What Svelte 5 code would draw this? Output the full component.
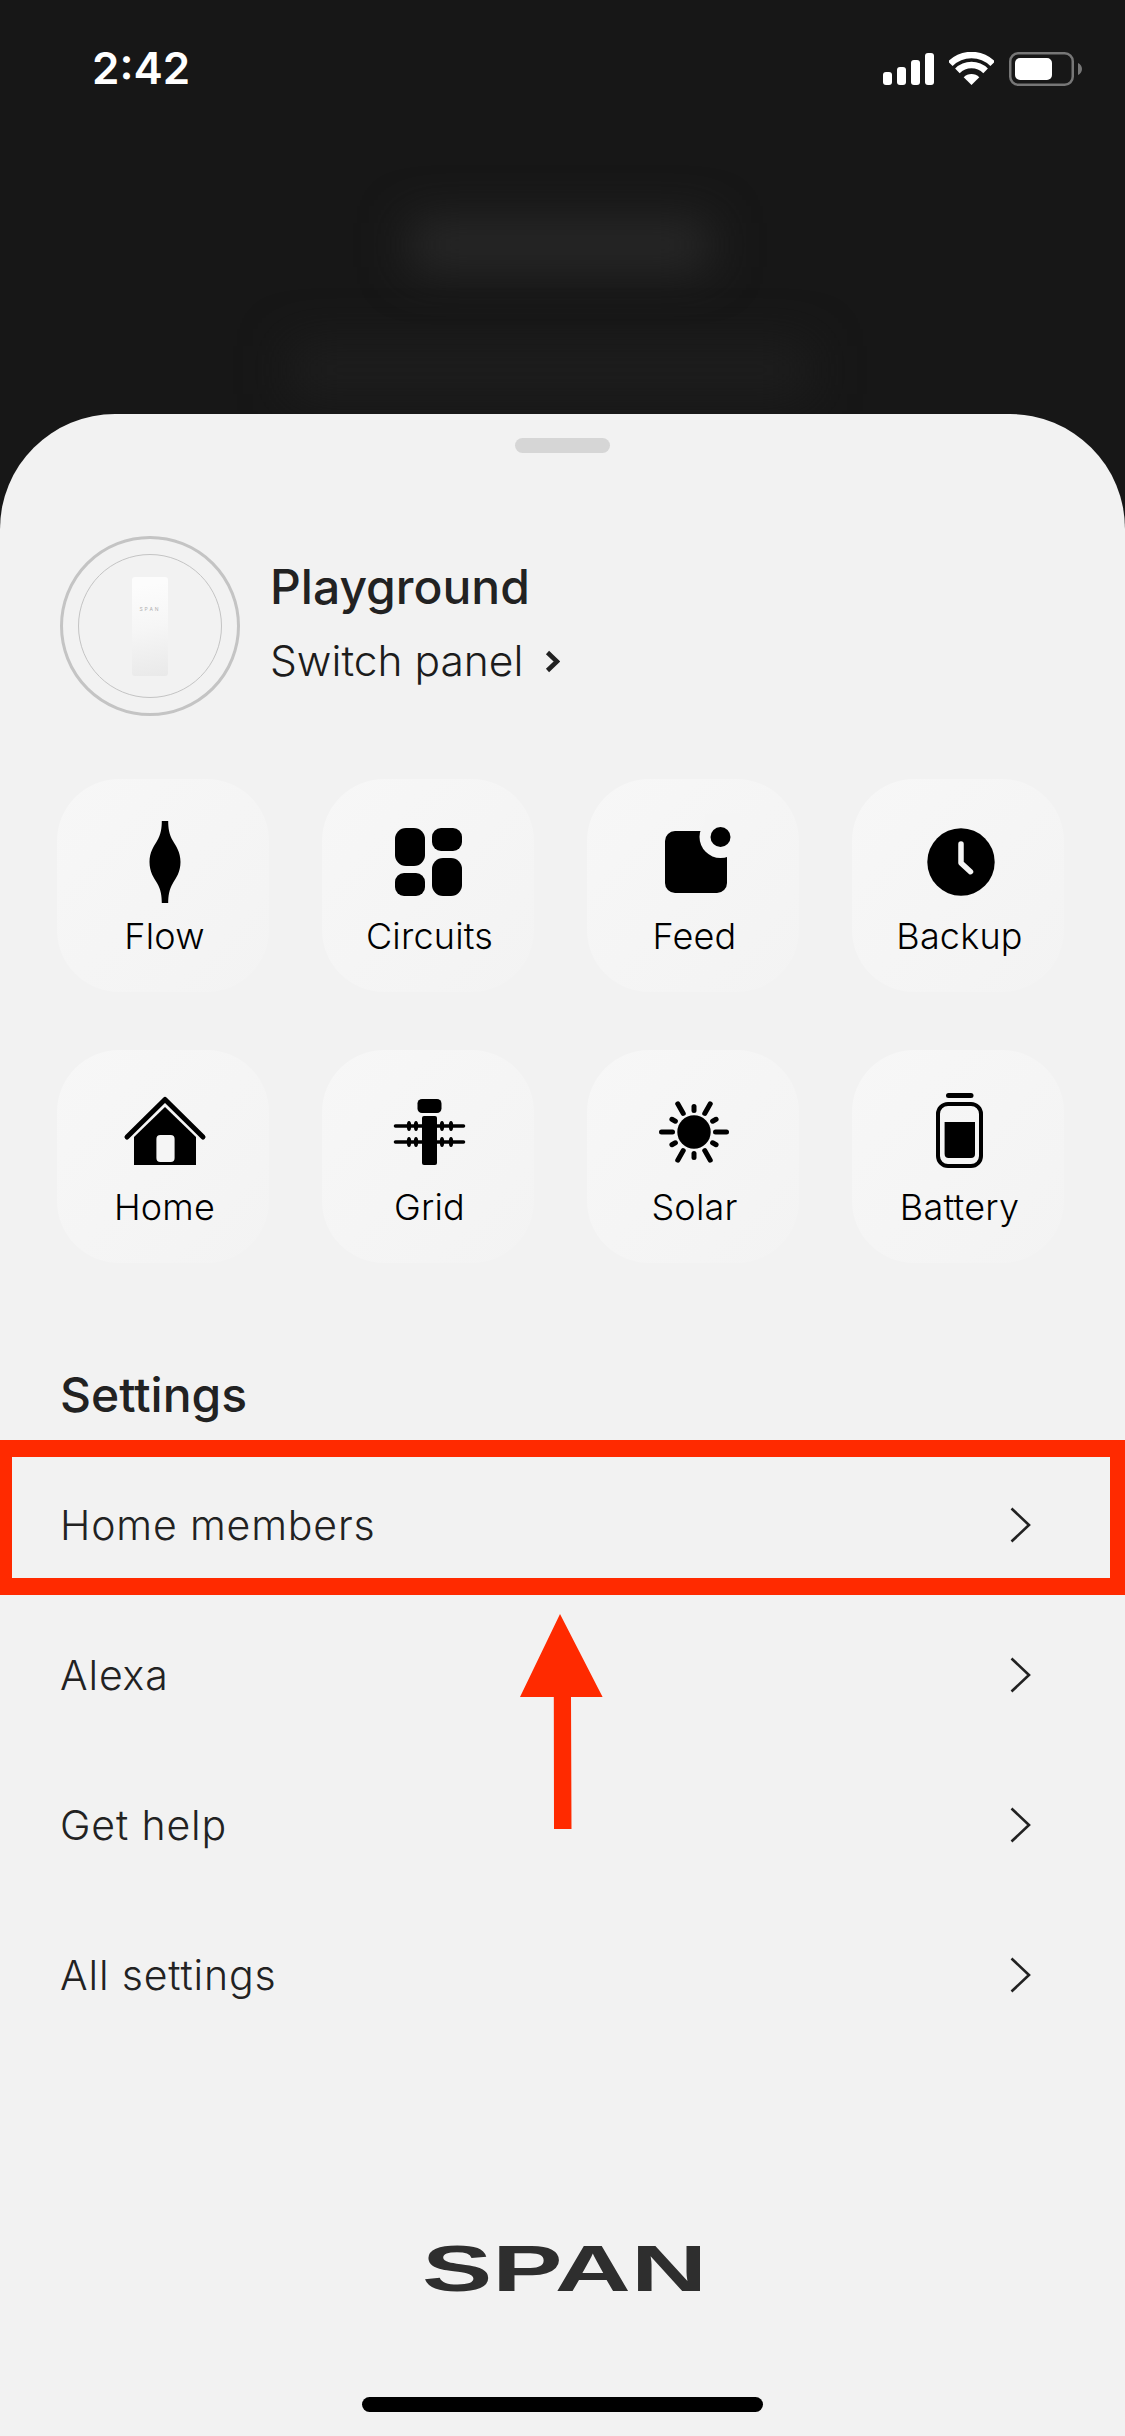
<script>
  const rows = ['Home members', 'Alexa', 'Get help', 'All settings'];
  const rays = [0, 30, 60, 90, 120, 150, 180, 210, 240, 270, 300, 330];
</script>

<div class="page">
  <div class="backdrop-a"></div>
  <div class="backdrop-b"></div>

  <header class="status">
    <span class="time">2:42</span>
    <div class="status-icons">
      <svg width="51" height="32" viewBox="0 0 51 32" fill="#fff">
        <rect x="0" y="19" width="9" height="13" rx="3" />
        <rect x="14" y="14" width="9" height="18" rx="3" />
        <rect x="28" y="7" width="9" height="25" rx="3" />
        <rect x="42" y="0" width="9" height="32" rx="3" />
      </svg>
      <svg width="45" height="33" viewBox="0 0 45 33">
        <path d="M1.3 11.8A30 30 0 0 1 43.7 11.8" fill="none" stroke="#fff" stroke-width="6.5" />
        <path d="M8.4 18.9A20 20 0 0 1 36.6 18.9" fill="none" stroke="#fff" stroke-width="6.5" />
        <path d="M22.5 33L14.7 25.2A11 11 0 0 1 30.3 25.2Z" fill="#fff" />
      </svg>
      <svg width="73" height="34" viewBox="0 0 73 34">
        <rect x="1.25" y="1.25" width="62.5" height="31.5" rx="8" fill="none" stroke="#777" stroke-width="2.5" />
        <rect x="6" y="6" width="37" height="22" rx="5" fill="#fff" />
        <path d="M69 11C71.5 12 73 14.5 73 17C73 19.5 71.5 22 69 23Z" fill="#777" />
      </svg>
    </div>
  </header>

  <main class="sheet">
    <div class="handle"></div>

    <section class="panel">
      <div class="avatar">
        <div class="avatar-inner">
          <div class="device"><span>SPAN</span></div>
        </div>
      </div>
      <div class="panel-text">
        <h1>Playground</h1>
        <p>
          Switch panel
          <svg width="15" height="23" viewBox="0 0 15 23"><path d="M2.5 2.5L12 11.5L2.5 20.5" fill="none" stroke="#222" stroke-width="4.6" /></svg>
        </p>
      </div>
    </section>

    <nav class="tiles">
      <div class="tile">
        <svg class="glyph" viewBox="0 0 96 96">
          <path d="M46.8 7H53.2C53.2 14 54 20 58 27C61 32 65.5 38 65.5 48C65.5 58 61 64 58 69C54 76 53.2 82 53.2 89H46.8C46.8 82 46 76 42 69C39 64 34.5 58 34.5 48C34.5 38 39 32 42 27C46 20 46.8 14 46.8 7Z" />
        </svg>
        <span>Flow</span>
      </div>
      <div class="tile">
        <svg class="glyph" viewBox="0 0 96 96">
          <rect x="15" y="14" width="30" height="38" rx="11" />
          <rect x="52" y="14" width="30" height="23" rx="9" />
          <rect x="15" y="59" width="30" height="23" rx="9" />
          <rect x="52" y="44" width="30" height="38" rx="11" />
        </svg>
        <span>Circuits</span>
      </div>
      <div class="tile">
        <svg class="glyph" viewBox="0 0 96 96">
          <rect x="20" y="17" width="62" height="62" rx="10" />
          <circle cx="75.5" cy="23" r="21" fill="#f5f5f5" />
          <rect x="60" y="0" width="36" height="17" fill="#f5f5f5" />
          <circle cx="75.5" cy="23" r="10" />
        </svg>
        <span>Feed</span>
      </div>
      <div class="tile">
        <svg class="glyph" viewBox="0 0 96 96">
          <circle cx="51" cy="48" r="33.7" />
          <path d="M51 30V49L60.5 57.7" fill="none" stroke="#f5f5f5" stroke-width="5.5" stroke-linecap="round" stroke-linejoin="round" />
        </svg>
        <span>Backup</span>
      </div>
      <div class="tile">
        <svg class="glyph" viewBox="0 0 96 96">
          <path d="M12 52L50 14.5L88 52" fill="none" stroke="#000" stroke-width="5" stroke-linecap="round" stroke-linejoin="round" />
          <path d="M50 22L81 52V80H19V52Z" />
          <rect x="41.4" y="50" width="18.2" height="27" rx="4" fill="#f5f5f5" />
        </svg>
        <span>Home</span>
      </div>
      <div class="tile">
        <svg class="glyph" viewBox="0 0 96 96">
          <rect x="37.5" y="14" width="24" height="14" rx="4.5" />
          <rect x="42" y="31" width="15" height="49" rx="2" />
          <path d="M15.5 41H83.5M15.5 57H83.5" stroke="#000" stroke-width="3.6" stroke-linecap="round" />
          {#each [29, 36, 62, 71] as x}
            <ellipse cx={x} cy="41" rx="2.2" ry="5" />
            <ellipse cx={x} cy="57" rx="2.2" ry="5" />
          {/each}
        </svg>
        <span>Grid</span>
      </div>
      <div class="tile">
        <svg class="glyph" viewBox="0 0 96 96">
          <circle cx="49" cy="47" r="16.7" />
          {#each rays as a, i}
            <line x1="70.5" y1="47" x2={i % 2 ? 74.5 : 81.5} y2="47" transform="rotate({a} 49 47)" stroke="#000" stroke-width="5" stroke-linecap="round" />
          {/each}
        </svg>
        <span>Solar</span>
      </div>
      <div class="tile">
        <svg class="glyph" viewBox="0 0 96 96">
          <rect x="36" y="8" width="27.5" height="5" rx="2.5" />
          <rect x="28" y="19" width="43" height="62" rx="10" fill="none" stroke="#000" stroke-width="4" />
          <path d="M34.6 37H65V69A4 4 0 0 1 61 73H38.6A4 4 0 0 1 34.6 69Z" />
        </svg>
        <span>Battery</span>
      </div>
    </nav>

    <h2>Settings</h2>

    <ul class="links">
      {#each rows as label, i}
        <li>
          {label}
          <svg width="21" height="36" viewBox="0 0 21 36"><path d="M1.5 1.5L19 18L1.5 34.5" fill="none" stroke="#222" stroke-width="2.6" /></svg>
          {#if i === 0}
            <div class="callout"></div>
          {/if}
        </li>
      {/each}
    </ul>

    <svg class="arrow" width="84" height="216" viewBox="0 0 84 216">
      <path d="M40 0L82.6 83H51L51.5 215H34L33.8 83H0Z" fill="#ff2a00" />
    </svg>

    <footer class="brand">
      <svg width="276" height="46" viewBox="0 0 276 46">
        <text x="-3" y="45.5" textLength="285" lengthAdjust="spacingAndGlyphs">SPAN</text>
      </svg>
    </footer>

    <div class="home-bar"></div>
  </main>
</div>

<style>
  :global(body) {
    margin: 0;
    background: #171717;
  }

  .page {
    position: relative;
    width: 1125px;
    height: 2436px;
    overflow: hidden;
    background: #171717;
    font-family: Inter, "Liberation Sans", sans-serif;
    color: #222;
  }

  .backdrop-a {
    position: absolute;
    left: 410px;
    top: 222px;
    width: 300px;
    height: 46px;
    background: #2a2a2a;
    filter: blur(24px);
  }

  .backdrop-b {
    position: absolute;
    left: 290px;
    top: 345px;
    width: 520px;
    height: 50px;
    background: #1e1e1e;
    filter: blur(24px);
  }

  .status {
    position: relative;
    box-sizing: border-box;
    height: 414px;
    padding: 52px 43px 0 92px;
    display: flex;
    justify-content: space-between;
    align-items: flex-start;
  }

  .time {
    color: #fff;
    font-size: 44px;
    font-weight: 600;
    line-height: 33px;
  }

  .status-icons {
    display: flex;
    align-items: flex-start;
    gap: 15px;
  }

  .status-icons svg:first-child {
    margin-top: 1px;
  }

  .sheet {
    position: relative;
    height: 2022px;
    background: #f2f2f2;
    border-radius: 115px 115px 0 0;
    display: flex;
    flex-direction: column;
  }

  .handle {
    width: 95px;
    height: 15px;
    margin: 24px auto 0;
    border-radius: 8px;
    background: #d6d6d6;
  }

  .panel {
    display: flex;
    align-items: center;
    gap: 30px;
    margin: 83px 0 0 60px;
  }

  .avatar {
    box-sizing: border-box;
    width: 180px;
    height: 180px;
    border: 3px solid #c4c4c4;
    border-radius: 50%;
    display: flex;
    align-items: center;
    justify-content: center;
  }

  .avatar-inner {
    box-sizing: border-box;
    width: 144px;
    height: 144px;
    border: 1px solid #c4c4c4;
    border-radius: 50%;
    display: flex;
    align-items: center;
    justify-content: center;
  }

  .device {
    width: 36px;
    height: 99px;
    border-radius: 3px;
    background: linear-gradient(170deg, #fcfcfc 10%, #f6f6f6 50%, #e9e9e9 100%);
    text-align: center;
    font-size: 5px;
    letter-spacing: 2px;
    line-height: 1;
    color: #b0b0b0;
  }

  .device span {
    display: block;
    margin-top: 30px;
  }

  .panel-text h1 {
    margin: -7px 0 0;
    font-size: 48px;
    font-weight: 550;
    line-height: 56px;
    color: #222;
  }

  .panel-text p {
    margin: 21px 0 0;
    font-size: 42.5px;
    font-weight: 350;
    line-height: 50px;
    display: flex;
    align-items: center;
    gap: 22px;
    color: #1c1c1c;
  }

  .tiles {
    display: grid;
    grid-template-columns: repeat(4, 212px);
    column-gap: 53px;
    row-gap: 58px;
    margin: 63px 0 0 57px;
  }

  .tile {
    box-sizing: border-box;
    height: 213px;
    padding-top: 35px;
    border-radius: 62px;
    background: linear-gradient(135deg, #f7f7f7, #f3f3f3);
    display: flex;
    flex-direction: column;
    align-items: center;
    font-size: 36px;
    font-weight: 350;
    line-height: 44px;
    letter-spacing: 0.2px;
    color: #000;
  }

  .glyph {
    width: 96px;
    height: 96px;
    fill: #000;
    flex: none;
  }

  .tile span {
    margin-top: 4px;
    padding-left: 3px;
  }

  h2 {
    margin: 104px 0 0 60px;
    font-size: 48px;
    font-weight: 550;
    line-height: 56px;
    color: #222;
  }

  .links {
    list-style: none;
    margin: 27px 0 0;
    padding: 0;
  }

  .links li {
    position: relative;
    box-sizing: border-box;
    height: 150px;
    padding: 0 94px 0 60px;
    display: flex;
    align-items: center;
    justify-content: space-between;
    font-size: 41px;
    font-weight: 350;
    letter-spacing: 0.85px;
    color: #222;
  }

  .callout {
    position: absolute;
    left: -5px;
    right: -2px;
    top: -10px;
    bottom: 5px;
    border: 17px solid #ff2a00;
  }

  .arrow {
    position: absolute;
    left: 520px;
    top: 1200px;
  }

  .brand {
    position: absolute;
    left: 425px;
    top: 1831px;
    line-height: 0;
  }

  .brand svg {
    overflow: visible;
  }

  .brand text {
    font-family: "Liberation Sans", sans-serif;
    font-weight: 700;
    font-size: 64px;
    fill: #2e2e2e;
  }

  .home-bar {
    position: absolute;
    left: 362px;
    top: 1983px;
    width: 401px;
    height: 15px;
    border-radius: 8px;
    background: #000;
  }
</style>
